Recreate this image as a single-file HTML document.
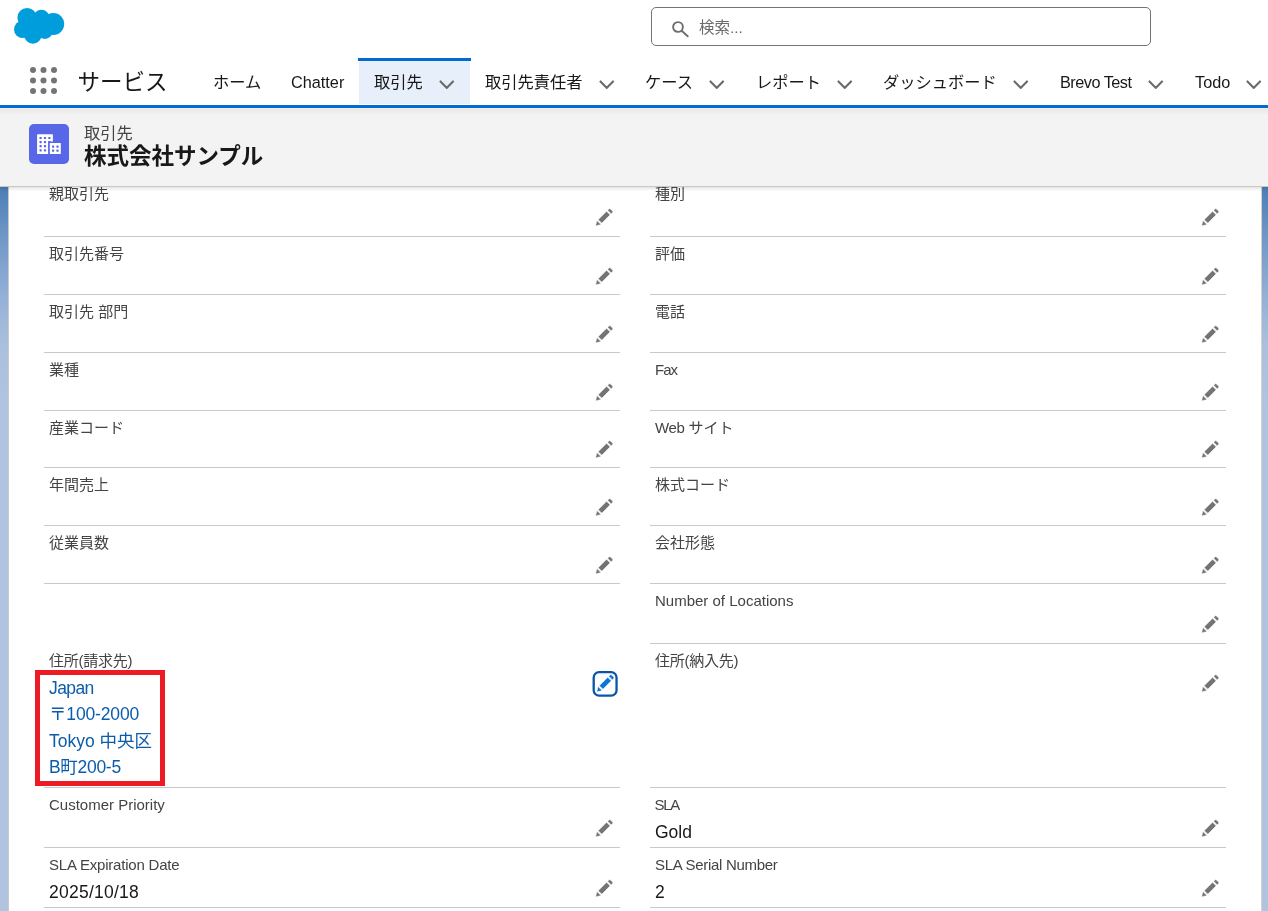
<!DOCTYPE html>
<html lang="ja">
<head>
<meta charset="utf-8">
<title>株式会社サンプル | 取引先 | Salesforce</title>
<style>
*{box-sizing:border-box;margin:0;padding:0}
html,body{width:1268px;height:911px;overflow:hidden}
body{position:relative;background:#b0c4df;font-family:"Liberation Sans","Noto Sans CJK JP",sans-serif;color:#181818}
#bg{position:absolute;left:0;top:186px;width:1268px;height:725px;background:linear-gradient(to bottom,#4a7db4 0px,#6f97c6 50px,#94b0d6 110px,#abc0dd 160px,#b0c4df 220px,#b0c4df 100%)}
#card{position:absolute;left:8px;top:186px;width:1254px;height:725px;background:#fff;border-left:1px solid #c8c8c8;border-right:1px solid #d6d1cc}
#top{position:absolute;left:0;top:0;width:1268px;height:108px;background:#fff;border-bottom:3px solid #006bd1}
#logo{position:absolute;left:0;top:0;width:80px;height:50px}
#search{position:absolute;left:651px;top:7px;width:500px;height:39px;border:1px solid #747474;border-radius:5px;background:#fff}
#search svg{position:absolute;left:20px;top:12.800px;width:17px;height:17px;fill:none;stroke:#6e6e6e;stroke-width:1.9;stroke-linecap:round}
#search span{position:absolute;left:47px;top:0;line-height:39px;font-size:15.5px;color:#6b6b6b;white-space:nowrap}
#waffle{position:absolute;left:30px;top:67.300px;width:27px;height:27px;fill:#747474}
#app{position:absolute;left:77.500px;top:61px;height:43px;line-height:43px;font-size:22.5px;color:#181818;white-space:nowrap}
.nav{position:absolute;top:61px;height:43px;line-height:43px;font-size:16.25px;color:#181818;white-space:nowrap}
.chev{position:absolute;top:75.5px;width:17.5px;height:17.5px;fill:#6a6a6a}
#tab{position:absolute;left:359px;top:58px;width:111px;height:46px;background:#e7f0fa}
#tabbar{position:absolute;left:358px;top:58px;width:113px;height:3px;background:#006bd1}
#hdr{position:absolute;left:0;top:108px;width:1268px;height:79px;background:linear-gradient(to bottom,#f3ece9 0,#f3ece9 1px,#e8e8e8 1px,#f3f3f3 7px,#f3f3f3 100%);box-shadow:0 2px 3px rgba(0,0,0,.11);border-bottom:1px solid #c8c8c8}
#ico{position:absolute;left:29px;top:124px;width:40px;height:40px;border-radius:5px;background:#5867e8}
#ico svg{display:block;width:40px;height:40px}
#ent{position:absolute;left:84px;top:123px;font-size:16.25px;line-height:20px;color:#444;white-space:nowrap}
#ttl{position:absolute;left:84px;top:143px;font-size:22.5px;line-height:28px;font-weight:700;color:#181818;white-space:nowrap}
.lbl{position:absolute;font-size:15px;line-height:20px;color:#444;white-space:nowrap}
.val{position:absolute;font-size:17.5px;line-height:24px;color:#181818;white-space:nowrap}
.lnk{position:absolute;font-size:17.5px;line-height:24px;color:#0b5cab;white-space:nowrap}
.sep{position:absolute;height:1px;background:#c9c9c9}
.pen{position:absolute;width:18.500px;height:18.500px;fill:#747474;stroke:#fff;stroke-width:1.6;stroke-linejoin:round}
#red{position:absolute;left:35px;top:670px;width:130px;height:116px;border:5px solid #ed1c24}
#editbtn{position:absolute;left:592px;top:670px;width:27px;height:28px}
#editbtn svg{position:absolute;left:0;top:0;width:27px;height:28px}
#wrap{position:absolute;left:0;top:0;width:1268px;height:911px;will-change:transform}
</style>
</head>
<body>
<div id="wrap">
<div id="bg"></div>
<div id="card"></div>
<div class="lbl" style="left:49px;top:184px;">親取引先</div>
<div class="lbl" style="left:655px;top:184px;">種別</div>
<div class="sep" style="left:44px;top:236px;width:576px"></div>
<div class="sep" style="left:650px;top:236px;width:576px"></div>
<svg class="pen" style="left:595.45px;top:208px" viewBox="0 0 52 52"><path d="M9.5 33.4l8.9 8.9c.4.4 1 .4 1.400 0L42 20c.4-.4.4-1 0-1.400l-8.800-8.800c-.400-.400-1-.400-1.400 0L9.500 32.100c-.400.400-.400 1 0 1.300zM36.100 5.700c-.400.400-.400 1 0 1.400l8.800 8.800c.400.400 1 .400 1.400 0l2.500-2.500c1.600-1.500 1.600-3.900 0-5.500l-4.700-4.700c-1.600-1.600-4.100-1.600-5.700 0l-2.300 2.500zM2.100 48.200c-.200 1 .700 1.900 1.700 1.700l10.900-2.600c.400-.100.700-.300.900-.500l.200-.200c.200-.200.300-.900-.100-1.300l-9-9c-.400-.400-1.100-.300-1.300-.100l-.200.200c-.300.300-.400.600-.500.900L2.100 48.200z"/></svg>
<svg class="pen" style="left:1201.15px;top:208px" viewBox="0 0 52 52"><path d="M9.5 33.4l8.9 8.9c.4.4 1 .4 1.400 0L42 20c.4-.4.4-1 0-1.400l-8.800-8.800c-.400-.400-1-.400-1.400 0L9.500 32.100c-.400.400-.400 1 0 1.300zM36.100 5.700c-.400.400-.400 1 0 1.400l8.800 8.800c.400.400 1 .400 1.400 0l2.500-2.500c1.600-1.500 1.600-3.900 0-5.500l-4.700-4.700c-1.600-1.600-4.100-1.600-5.700 0l-2.300 2.500zM2.100 48.200c-.200 1 .700 1.900 1.700 1.700l10.900-2.600c.400-.100.700-.300.900-.500l.200-.200c.200-.200.300-.900-.100-1.300l-9-9c-.400-.400-1.100-.300-1.300-.100l-.200.200c-.300.300-.400.600-.500.900L2.100 48.200z"/></svg>
<div class="lbl" style="left:49px;top:244px;">取引先番号</div>
<div class="lbl" style="left:655px;top:244px;">評価</div>
<div class="sep" style="left:44px;top:294px;width:576px"></div>
<div class="sep" style="left:650px;top:294px;width:576px"></div>
<svg class="pen" style="left:595.45px;top:266.7px" viewBox="0 0 52 52"><path d="M9.5 33.4l8.9 8.9c.4.4 1 .4 1.400 0L42 20c.4-.4.4-1 0-1.400l-8.800-8.800c-.400-.400-1-.400-1.400 0L9.500 32.100c-.400.400-.400 1 0 1.300zM36.100 5.700c-.400.400-.400 1 0 1.400l8.800 8.800c.400.400 1 .400 1.400 0l2.500-2.500c1.600-1.500 1.600-3.900 0-5.500l-4.700-4.700c-1.600-1.600-4.100-1.600-5.700 0l-2.300 2.500zM2.100 48.200c-.200 1 .700 1.900 1.700 1.700l10.900-2.600c.400-.100.700-.300.900-.500l.200-.200c.200-.200.300-.900-.100-1.300l-9-9c-.400-.400-1.100-.300-1.300-.100l-.200.200c-.300.300-.400.600-.500.900L2.100 48.200z"/></svg>
<svg class="pen" style="left:1201.15px;top:266.7px" viewBox="0 0 52 52"><path d="M9.5 33.4l8.9 8.9c.4.4 1 .4 1.400 0L42 20c.4-.4.4-1 0-1.400l-8.800-8.800c-.400-.400-1-.400-1.400 0L9.500 32.100c-.400.400-.400 1 0 1.300zM36.100 5.700c-.400.400-.400 1 0 1.400l8.800 8.800c.400.400 1 .400 1.400 0l2.500-2.500c1.600-1.500 1.600-3.900 0-5.500l-4.700-4.700c-1.600-1.600-4.100-1.600-5.700 0l-2.300 2.500zM2.100 48.200c-.200 1 .700 1.900 1.700 1.700l10.900-2.600c.400-.100.700-.300.900-.500l.200-.200c.200-.200.300-.900-.100-1.300l-9-9c-.400-.400-1.100-.300-1.300-.100l-.200.200c-.300.300-.400.600-.500.900L2.100 48.200z"/></svg>
<div class="lbl" style="left:49px;top:302px;">取引先 部門</div>
<div class="lbl" style="left:655px;top:302px;">電話</div>
<div class="sep" style="left:44px;top:352px;width:576px"></div>
<div class="sep" style="left:650px;top:352px;width:576px"></div>
<svg class="pen" style="left:595.45px;top:324.7px" viewBox="0 0 52 52"><path d="M9.5 33.4l8.9 8.9c.4.4 1 .4 1.400 0L42 20c.4-.4.4-1 0-1.400l-8.800-8.800c-.400-.400-1-.400-1.400 0L9.500 32.100c-.400.400-.400 1 0 1.300zM36.100 5.700c-.400.400-.400 1 0 1.400l8.800 8.800c.400.400 1 .400 1.400 0l2.500-2.500c1.600-1.500 1.600-3.900 0-5.500l-4.700-4.700c-1.600-1.600-4.100-1.600-5.700 0l-2.300 2.500zM2.100 48.200c-.200 1 .700 1.900 1.700 1.700l10.900-2.600c.400-.100.700-.300.900-.500l.200-.200c.200-.200.300-.900-.100-1.300l-9-9c-.400-.400-1.100-.300-1.300-.100l-.200.200c-.300.300-.400.600-.500.900L2.100 48.200z"/></svg>
<svg class="pen" style="left:1201.15px;top:324.7px" viewBox="0 0 52 52"><path d="M9.5 33.4l8.9 8.9c.4.4 1 .4 1.400 0L42 20c.4-.4.4-1 0-1.400l-8.800-8.800c-.400-.400-1-.400-1.400 0L9.500 32.100c-.400.400-.400 1 0 1.300zM36.100 5.700c-.400.400-.400 1 0 1.400l8.800 8.800c.400.400 1 .400 1.400 0l2.500-2.500c1.600-1.500 1.600-3.900 0-5.500l-4.700-4.700c-1.600-1.600-4.100-1.600-5.700 0l-2.300 2.500zM2.100 48.200c-.200 1 .700 1.900 1.700 1.700l10.900-2.600c.400-.100.700-.300.900-.500l.200-.200c.200-.200.300-.900-.100-1.300l-9-9c-.400-.400-1.100-.300-1.300-.100l-.200.200c-.300.300-.400.600-.500.900L2.100 48.200z"/></svg>
<div class="lbl" style="left:49px;top:360px;">業種</div>
<div class="lbl" style="left:655px;top:360px;letter-spacing:-1px">Fax</div>
<div class="sep" style="left:44px;top:410px;width:576px"></div>
<div class="sep" style="left:650px;top:410px;width:576px"></div>
<svg class="pen" style="left:595.45px;top:382.7px" viewBox="0 0 52 52"><path d="M9.5 33.4l8.9 8.9c.4.4 1 .4 1.400 0L42 20c.4-.4.4-1 0-1.400l-8.800-8.800c-.400-.400-1-.400-1.400 0L9.500 32.100c-.400.400-.400 1 0 1.300zM36.100 5.700c-.400.400-.400 1 0 1.400l8.800 8.800c.400.400 1 .400 1.400 0l2.500-2.500c1.600-1.500 1.600-3.900 0-5.500l-4.700-4.700c-1.600-1.600-4.100-1.600-5.700 0l-2.300 2.500zM2.100 48.200c-.200 1 .700 1.900 1.700 1.700l10.900-2.600c.400-.100.700-.300.900-.500l.200-.200c.200-.200.300-.900-.100-1.300l-9-9c-.400-.400-1.100-.300-1.300-.100l-.200.200c-.300.300-.400.600-.500.900L2.100 48.200z"/></svg>
<svg class="pen" style="left:1201.15px;top:382.7px" viewBox="0 0 52 52"><path d="M9.5 33.4l8.9 8.9c.4.4 1 .4 1.400 0L42 20c.4-.4.4-1 0-1.400l-8.800-8.800c-.400-.400-1-.400-1.400 0L9.500 32.100c-.400.400-.400 1 0 1.300zM36.100 5.700c-.400.400-.400 1 0 1.400l8.800 8.800c.400.400 1 .400 1.400 0l2.500-2.500c1.600-1.500 1.600-3.900 0-5.500l-4.700-4.700c-1.600-1.600-4.100-1.600-5.700 0l-2.300 2.500zM2.100 48.200c-.200 1 .700 1.900 1.700 1.700l10.900-2.600c.400-.100.700-.300.900-.500l.200-.200c.200-.200.300-.900-.100-1.300l-9-9c-.400-.400-1.100-.300-1.300-.100l-.200.200c-.300.300-.400.600-.500.900L2.100 48.200z"/></svg>
<div class="lbl" style="left:49px;top:418px;">産業コード</div>
<div class="lbl" style="left:655px;top:418px;"><span style="letter-spacing:-.4px">Web</span> サイト</div>
<div class="sep" style="left:44px;top:467px;width:576px"></div>
<div class="sep" style="left:650px;top:467px;width:576px"></div>
<svg class="pen" style="left:595.45px;top:439.7px" viewBox="0 0 52 52"><path d="M9.5 33.4l8.9 8.9c.4.4 1 .4 1.400 0L42 20c.4-.4.4-1 0-1.400l-8.800-8.800c-.400-.400-1-.400-1.400 0L9.500 32.100c-.400.400-.400 1 0 1.300zM36.100 5.700c-.400.400-.400 1 0 1.400l8.800 8.800c.400.400 1 .400 1.400 0l2.500-2.500c1.600-1.500 1.600-3.900 0-5.500l-4.700-4.700c-1.600-1.600-4.100-1.600-5.700 0l-2.300 2.500zM2.100 48.200c-.200 1 .700 1.900 1.700 1.700l10.900-2.600c.400-.100.700-.300.900-.500l.200-.200c.200-.200.300-.900-.100-1.300l-9-9c-.400-.400-1.100-.300-1.300-.100l-.200.200c-.300.300-.400.600-.500.900L2.100 48.200z"/></svg>
<svg class="pen" style="left:1201.15px;top:439.7px" viewBox="0 0 52 52"><path d="M9.5 33.4l8.9 8.9c.4.4 1 .4 1.400 0L42 20c.4-.4.4-1 0-1.400l-8.800-8.800c-.400-.400-1-.400-1.400 0L9.500 32.100c-.400.400-.400 1 0 1.300zM36.100 5.700c-.400.400-.400 1 0 1.400l8.800 8.800c.400.400 1 .400 1.400 0l2.500-2.500c1.600-1.500 1.600-3.900 0-5.500l-4.700-4.700c-1.600-1.600-4.100-1.600-5.700 0l-2.300 2.500zM2.100 48.200c-.200 1 .700 1.900 1.700 1.700l10.900-2.600c.400-.100.700-.300.900-.500l.200-.200c.200-.200.300-.900-.100-1.300l-9-9c-.400-.400-1.100-.300-1.300-.100l-.200.200c-.300.300-.400.600-.500.900L2.100 48.200z"/></svg>
<div class="lbl" style="left:49px;top:475px;">年間売上</div>
<div class="lbl" style="left:655px;top:475px;">株式コード</div>
<div class="sep" style="left:44px;top:525px;width:576px"></div>
<div class="sep" style="left:650px;top:525px;width:576px"></div>
<svg class="pen" style="left:595.45px;top:497.7px" viewBox="0 0 52 52"><path d="M9.5 33.4l8.9 8.9c.4.4 1 .4 1.400 0L42 20c.4-.4.4-1 0-1.400l-8.800-8.800c-.400-.400-1-.400-1.400 0L9.500 32.100c-.400.400-.400 1 0 1.300zM36.100 5.700c-.400.400-.400 1 0 1.400l8.800 8.800c.400.400 1 .400 1.400 0l2.500-2.500c1.600-1.500 1.600-3.900 0-5.500l-4.700-4.700c-1.600-1.600-4.100-1.600-5.700 0l-2.300 2.500zM2.100 48.200c-.200 1 .700 1.900 1.700 1.700l10.900-2.600c.400-.100.700-.300.900-.500l.200-.200c.200-.200.300-.900-.100-1.300l-9-9c-.400-.400-1.100-.300-1.300-.100l-.200.200c-.300.300-.400.600-.500.900L2.100 48.200z"/></svg>
<svg class="pen" style="left:1201.15px;top:497.7px" viewBox="0 0 52 52"><path d="M9.5 33.4l8.9 8.9c.4.4 1 .4 1.400 0L42 20c.4-.4.4-1 0-1.400l-8.800-8.800c-.400-.400-1-.400-1.400 0L9.500 32.100c-.400.400-.400 1 0 1.300zM36.100 5.700c-.400.400-.400 1 0 1.400l8.800 8.800c.400.400 1 .400 1.400 0l2.500-2.500c1.600-1.500 1.600-3.900 0-5.500l-4.700-4.700c-1.600-1.600-4.100-1.600-5.700 0l-2.300 2.500zM2.100 48.200c-.200 1 .700 1.900 1.700 1.700l10.900-2.600c.400-.100.700-.300.900-.500l.200-.200c.200-.200.300-.900-.100-1.300l-9-9c-.400-.400-1.100-.300-1.300-.100l-.200.200c-.300.300-.400.600-.500.900L2.100 48.200z"/></svg>
<div class="lbl" style="left:49px;top:533px;">従業員数</div>
<div class="lbl" style="left:655px;top:533px;">会社形態</div>
<div class="sep" style="left:44px;top:583px;width:576px"></div>
<div class="sep" style="left:650px;top:583px;width:576px"></div>
<svg class="pen" style="left:595.45px;top:555.7px" viewBox="0 0 52 52"><path d="M9.5 33.4l8.9 8.9c.4.4 1 .4 1.400 0L42 20c.4-.4.4-1 0-1.400l-8.800-8.800c-.400-.400-1-.400-1.400 0L9.500 32.100c-.400.400-.400 1 0 1.300zM36.100 5.700c-.400.400-.400 1 0 1.400l8.800 8.800c.400.400 1 .400 1.400 0l2.500-2.500c1.600-1.500 1.600-3.900 0-5.500l-4.700-4.700c-1.600-1.600-4.100-1.600-5.700 0l-2.300 2.500zM2.100 48.200c-.200 1 .700 1.900 1.700 1.700l10.900-2.600c.400-.100.700-.300.900-.500l.200-.200c.200-.200.300-.900-.100-1.300l-9-9c-.400-.400-1.100-.300-1.300-.100l-.200.200c-.300.300-.400.600-.500.900L2.100 48.200z"/></svg>
<svg class="pen" style="left:1201.15px;top:555.7px" viewBox="0 0 52 52"><path d="M9.5 33.4l8.9 8.9c.4.4 1 .4 1.400 0L42 20c.4-.4.4-1 0-1.400l-8.800-8.800c-.400-.400-1-.400-1.400 0L9.500 32.100c-.400.400-.400 1 0 1.300zM36.100 5.700c-.400.400-.400 1 0 1.400l8.800 8.800c.400.400 1 .400 1.400 0l2.500-2.500c1.600-1.500 1.600-3.900 0-5.500l-4.700-4.700c-1.600-1.600-4.100-1.600-5.700 0l-2.300 2.500zM2.100 48.200c-.200 1 .700 1.900 1.700 1.700l10.900-2.600c.400-.100.700-.300.900-.500l.200-.200c.200-.200.300-.900-.100-1.300l-9-9c-.400-.400-1.100-.300-1.300-.100l-.200.200c-.300.300-.400.600-.500.900L2.100 48.200z"/></svg>
<div class="lbl" style="left:655px;top:591px;">Number of Locations</div>
<div class="sep" style="left:650px;top:643px;width:576px"></div>
<svg class="pen" style="left:1201.15px;top:615px" viewBox="0 0 52 52"><path d="M9.5 33.4l8.9 8.9c.4.4 1 .4 1.400 0L42 20c.4-.4.4-1 0-1.400l-8.800-8.800c-.400-.400-1-.400-1.400 0L9.500 32.100c-.400.400-.400 1 0 1.300zM36.100 5.700c-.400.400-.400 1 0 1.400l8.800 8.800c.400.400 1 .400 1.400 0l2.500-2.500c1.600-1.500 1.600-3.900 0-5.500l-4.700-4.700c-1.600-1.600-4.100-1.600-5.700 0l-2.300 2.500zM2.100 48.200c-.200 1 .700 1.900 1.700 1.700l10.900-2.600c.400-.100.700-.300.900-.500l.200-.200c.200-.200.300-.900-.100-1.300l-9-9c-.400-.400-1.100-.300-1.300-.100l-.200.200c-.300.300-.400.600-.500.900L2.100 48.200z"/></svg>
<div class="lbl" style="left:49px;top:651px;letter-spacing:-.25px">住所(請求先)</div>
<div class="lbl" style="left:655px;top:651px;letter-spacing:-.25px">住所(納入先)</div>
<div class="sep" style="left:44px;top:787px;width:576px"></div>
<div class="sep" style="left:650px;top:787px;width:576px"></div>
<svg class="pen" style="left:1201.15px;top:674px" viewBox="0 0 52 52"><path d="M9.5 33.4l8.9 8.9c.4.4 1 .4 1.400 0L42 20c.4-.4.4-1 0-1.400l-8.800-8.800c-.400-.400-1-.400-1.400 0L9.500 32.100c-.400.400-.400 1 0 1.300zM36.100 5.700c-.400.400-.400 1 0 1.400l8.800 8.800c.400.400 1 .400 1.400 0l2.500-2.500c1.600-1.500 1.600-3.900 0-5.500l-4.700-4.700c-1.600-1.600-4.100-1.600-5.700 0l-2.300 2.500zM2.100 48.200c-.200 1 .700 1.900 1.700 1.700l10.900-2.600c.400-.100.700-.300.900-.500l.200-.200c.200-.200.300-.900-.100-1.300l-9-9c-.400-.400-1.100-.300-1.300-.100l-.200.200c-.300.300-.400.600-.500.900L2.100 48.200z"/></svg>
<div class="lnk" style="left:49px;top:676px;letter-spacing:-.6px">Japan</div>
<div class="lnk" style="left:49px;top:702px;letter-spacing:-.15px">〒100-2000</div>
<div class="lnk" style="left:49px;top:729px;">Tokyo 中央区</div>
<div class="lnk" style="left:49px;top:755px;letter-spacing:-.3px">B町200-5</div>
<div id="red"></div>
<div id="editbtn"><svg viewBox="0 0 27 28"><rect x="1.700" y="2.150" width="22.850" height="23.400" rx="5.400" fill="#fff" stroke="#0b55a8" stroke-width="2.300"/><g transform="translate(4.150,4) scale(.35577)"><path d="M9.5 33.4l8.9 8.9c.4.4 1 .4 1.400 0L42 20c.4-.4.4-1 0-1.400l-8.800-8.800c-.400-.400-1-.400-1.400 0L9.500 32.100c-.400.400-.400 1 0 1.300zM36.100 5.700c-.400.400-.400 1 0 1.400l8.800 8.800c.400.400 1 .400 1.400 0l2.500-2.500c1.600-1.500 1.600-3.900 0-5.500l-4.700-4.700c-1.600-1.600-4.100-1.600-5.700 0l-2.300 2.500zM2.100 48.200c-.200 1 .700 1.900 1.700 1.700l10.900-2.600c.400-.100.700-.300.900-.500l.200-.200c.200-.200.300-.900-.100-1.300l-9-9c-.400-.400-1.100-.300-1.300-.100l-.200.200c-.300.300-.400.600-.500.900L2.100 48.200z" fill="#0f74d4" stroke="#fff" stroke-width="1.600" stroke-linejoin="round"/></g></svg></div>
<div class="lbl" style="left:49px;top:795px;">Customer Priority</div>
<div class="lbl" style="left:655px;top:795px;letter-spacing:-1.300px;margin-left:-.5px">SLA</div>
<div class="val" style="left:655px;top:820px;">Gold</div>
<div class="sep" style="left:44px;top:847px;width:576px"></div>
<div class="sep" style="left:650px;top:847px;width:576px"></div>
<svg class="pen" style="left:595.45px;top:819px" viewBox="0 0 52 52"><path d="M9.5 33.4l8.9 8.9c.4.4 1 .4 1.400 0L42 20c.4-.4.4-1 0-1.400l-8.800-8.800c-.400-.400-1-.400-1.400 0L9.500 32.100c-.400.400-.400 1 0 1.300zM36.100 5.700c-.400.400-.400 1 0 1.400l8.800 8.800c.400.400 1 .400 1.400 0l2.500-2.500c1.600-1.500 1.600-3.900 0-5.500l-4.700-4.700c-1.600-1.600-4.100-1.600-5.700 0l-2.300 2.500zM2.100 48.200c-.200 1 .700 1.900 1.700 1.700l10.900-2.600c.400-.100.700-.300.900-.500l.200-.200c.200-.200.300-.900-.100-1.300l-9-9c-.400-.400-1.100-.300-1.300-.100l-.200.200c-.300.300-.400.600-.500.900L2.100 48.200z"/></svg>
<svg class="pen" style="left:1201.15px;top:819px" viewBox="0 0 52 52"><path d="M9.5 33.4l8.9 8.9c.4.4 1 .4 1.400 0L42 20c.4-.4.4-1 0-1.400l-8.800-8.800c-.400-.400-1-.400-1.400 0L9.500 32.100c-.400.400-.400 1 0 1.300zM36.100 5.700c-.400.400-.400 1 0 1.400l8.800 8.800c.400.400 1 .400 1.400 0l2.500-2.500c1.600-1.500 1.600-3.900 0-5.500l-4.700-4.700c-1.600-1.600-4.100-1.600-5.700 0l-2.300 2.500zM2.100 48.200c-.200 1 .700 1.900 1.700 1.700l10.900-2.600c.400-.100.700-.300.900-.500l.200-.200c.200-.200.300-.900-.100-1.300l-9-9c-.400-.400-1.100-.300-1.300-.100l-.200.200c-.300.300-.400.600-.500.900L2.100 48.200z"/></svg>
<div class="lbl" style="left:49px;top:855px;letter-spacing:-.2px">SLA Expiration Date</div>
<div class="lbl" style="left:655px;top:855px;letter-spacing:-.3px">SLA Serial Number</div>
<div class="val" style="left:49px;top:880px;letter-spacing:.25px">2025/10/18</div>
<div class="val" style="left:655px;top:880px;">2</div>
<div class="sep" style="left:44px;top:907px;width:576px"></div>
<div class="sep" style="left:650px;top:907px;width:576px"></div>
<svg class="pen" style="left:595.45px;top:879px" viewBox="0 0 52 52"><path d="M9.5 33.4l8.9 8.9c.4.4 1 .4 1.400 0L42 20c.4-.4.4-1 0-1.400l-8.800-8.800c-.400-.400-1-.400-1.400 0L9.500 32.100c-.400.400-.400 1 0 1.300zM36.100 5.700c-.400.400-.400 1 0 1.400l8.800 8.800c.400.400 1 .400 1.400 0l2.500-2.500c1.600-1.500 1.600-3.900 0-5.500l-4.700-4.700c-1.600-1.600-4.100-1.600-5.700 0l-2.300 2.500zM2.100 48.200c-.200 1 .700 1.900 1.700 1.700l10.900-2.600c.400-.100.700-.300.900-.500l.200-.200c.200-.200.300-.900-.100-1.300l-9-9c-.400-.400-1.100-.300-1.300-.100l-.200.200c-.300.300-.400.600-.500.900L2.100 48.200z"/></svg>
<svg class="pen" style="left:1201.15px;top:879px" viewBox="0 0 52 52"><path d="M9.5 33.4l8.9 8.9c.4.4 1 .4 1.400 0L42 20c.4-.4.4-1 0-1.400l-8.800-8.800c-.400-.400-1-.400-1.400 0L9.500 32.100c-.400.400-.400 1 0 1.300zM36.100 5.700c-.400.400-.400 1 0 1.400l8.800 8.800c.400.400 1 .400 1.400 0l2.500-2.500c1.600-1.500 1.600-3.900 0-5.500l-4.700-4.700c-1.600-1.600-4.100-1.600-5.700 0l-2.300 2.500zM2.100 48.200c-.200 1 .700 1.900 1.700 1.700l10.900-2.600c.400-.100.700-.300.900-.500l.200-.200c.200-.200.300-.900-.100-1.300l-9-9c-.400-.400-1.100-.300-1.300-.100l-.200.200c-.300.300-.400.600-.500.900L2.100 48.200z"/></svg>
<div id="top"></div>
<svg id="logo" viewBox="0 0 80 50"><g fill="#009ddc"><circle cx="27.100" cy="17.700" r="9.700"/><circle cx="41.400" cy="17.700" r="8"/><circle cx="53.300" cy="24" r="10.900"/><circle cx="22.700" cy="29.300" r="8.700"/><circle cx="32.900" cy="34.800" r="8.900"/><circle cx="44.800" cy="30.900" r="8"/><rect x="24" y="18" width="28" height="16"/></g></svg>
<div id="search"><svg viewBox="0 0 17 17"><circle cx="6" cy="6" r="4.900"/><path d="M9.700 9.700L15.700 15.300"/></svg><span>検索...</span></div>
<svg id="waffle" viewBox="0 0 27 27"><circle cx="3.0" cy="3.0" r="3"/><circle cx="13.5" cy="3.0" r="3"/><circle cx="24.0" cy="3.0" r="3"/><circle cx="3.0" cy="13.5" r="3"/><circle cx="13.5" cy="13.5" r="3"/><circle cx="24.0" cy="13.5" r="3"/><circle cx="3.0" cy="24.0" r="3"/><circle cx="13.5" cy="24.0" r="3"/><circle cx="24.0" cy="24.0" r="3"/></svg>
<div id="app">サービス</div>
<div id="tab"></div><div id="tabbar"></div>
<div class="nav" style="left:213px;">ホーム</div>
<div class="nav" style="left:291px;">Chatter</div>
<div class="nav" style="left:374px;">取引先</div>
<svg class="chev" style="left:438.35px" viewBox="0 0 52 52"><path d="M47.600 17.800L27.100 38.500c-.600.600-1.600.600-2.200 0L4.400 17.800c-.600-.600-.600-1.600 0-2.200l2.200-2.200c.600-.600 1.600-.600 2.200 0l16.100 16.400c.600.600 1.600.600 2.200 0l16.100-16.400c.600-.600 1.600-.600 2.200 0l2.200 2.200c.500.600.500 1.600-.100 2.200z"/></svg>
<div class="nav" style="left:485px;">取引先責任者</div>
<svg class="chev" style="left:597.95px" viewBox="0 0 52 52"><path d="M47.600 17.800L27.100 38.500c-.600.600-1.600.600-2.200 0L4.400 17.800c-.600-.600-.600-1.600 0-2.200l2.200-2.200c.600-.600 1.600-.600 2.200 0l16.100 16.400c.600.600 1.600.600 2.200 0l16.100-16.400c.600-.600 1.600-.600 2.200 0l2.200 2.200c.500.600.500 1.600-.100 2.200z"/></svg>
<div class="nav" style="left:645px;">ケース</div>
<svg class="chev" style="left:708.15px" viewBox="0 0 52 52"><path d="M47.600 17.800L27.100 38.500c-.600.600-1.600.600-2.200 0L4.400 17.800c-.600-.600-.600-1.600 0-2.200l2.200-2.200c.600-.600 1.600-.600 2.200 0l16.100 16.400c.600.600 1.600.600 2.200 0l16.100-16.400c.600-.600 1.600-.600 2.200 0l2.200 2.200c.500.600.500 1.600-.100 2.200z"/></svg>
<div class="nav" style="left:756px;">レポート</div>
<svg class="chev" style="left:835.95px" viewBox="0 0 52 52"><path d="M47.600 17.800L27.100 38.500c-.600.600-1.600.600-2.200 0L4.400 17.800c-.600-.600-.600-1.600 0-2.200l2.200-2.200c.600-.600 1.600-.600 2.200 0l16.100 16.400c.600.600 1.600.600 2.200 0l16.100-16.400c.600-.600 1.600-.600 2.200 0l2.200 2.200c.500.600.500 1.600-.100 2.200z"/></svg>
<div class="nav" style="left:883px;">ダッシュボード</div>
<svg class="chev" style="left:1012.35px" viewBox="0 0 52 52"><path d="M47.600 17.800L27.100 38.500c-.600.600-1.600.600-2.200 0L4.400 17.800c-.600-.600-.600-1.600 0-2.200l2.200-2.200c.600-.600 1.600-.600 2.200 0l16.100 16.400c.600.600 1.600.600 2.200 0l16.100-16.400c.600-.600 1.600-.600 2.200 0l2.200 2.200c.500.600.500 1.600-.100 2.200z"/></svg>
<div class="nav" style="left:1060px;letter-spacing:-.5px">Brevo Test</div>
<svg class="chev" style="left:1147.35px" viewBox="0 0 52 52"><path d="M47.600 17.800L27.100 38.500c-.600.600-1.600.600-2.200 0L4.400 17.800c-.600-.600-.600-1.600 0-2.200l2.200-2.200c.600-.600 1.600-.600 2.200 0l16.100 16.400c.600.600 1.600.600 2.200 0l16.100-16.400c.600-.600 1.600-.600 2.200 0l2.200 2.200c.500.600.500 1.600-.100 2.200z"/></svg>
<div class="nav" style="left:1195px;">Todo</div>
<svg class="chev" style="left:1245.25px" viewBox="0 0 52 52"><path d="M47.600 17.800L27.100 38.500c-.600.600-1.600.600-2.200 0L4.400 17.800c-.600-.600-.600-1.600 0-2.200l2.200-2.200c.600-.600 1.600-.600 2.200 0l16.100 16.400c.600.600 1.600.600 2.200 0l16.100-16.400c.600-.600 1.600-.600 2.200 0l2.200 2.200c.500.600.500 1.600-.100 2.200z"/></svg>
<div id="hdr"></div>
<div id="ico"><svg viewBox="0 0 40 40"><rect x="8.1" y="10.300" width="15.800" height="19.700" rx=".5" fill="#fff"/><g fill="#5867e8"><rect x="10.5" y="12.9" width="2.2" height="2.2" rx=".6"/><rect x="14.9" y="12.9" width="2.2" height="2.2" rx=".6"/><rect x="19.3" y="12.9" width="2.2" height="2.2" rx=".6"/><rect x="10.5" y="17.0" width="2.2" height="2.2" rx=".6"/><rect x="14.9" y="17.0" width="2.2" height="2.2" rx=".6"/><rect x="19.3" y="17.0" width="2.2" height="2.2" rx=".6"/><rect x="10.5" y="21.1" width="2.2" height="2.2" rx=".6"/><rect x="14.9" y="21.1" width="2.2" height="2.2" rx=".6"/><rect x="19.3" y="21.1" width="2.2" height="2.2" rx=".6"/><rect x="10.5" y="25.2" width="2.2" height="2.2" rx=".6"/><rect x="14.9" y="25.2" width="2.2" height="2.2" rx=".6"/><rect x="19.3" y="25.2" width="2.2" height="2.2" rx=".6"/></g><rect x="19.100" y="17.500" width="14" height="14" fill="#5867e8"/><rect x="20.800" y="19.100" width="11" height="10.900" rx=".5" fill="#fff"/><g fill="#5867e8"><rect x="23.0" y="21.5" width="2.2" height="2.2" rx=".6"/><rect x="27.4" y="21.5" width="2.2" height="2.2" rx=".6"/><rect x="23.0" y="25.6" width="2.2" height="2.2" rx=".6"/><rect x="27.4" y="25.6" width="2.2" height="2.2" rx=".6"/></g></svg></div>
<div id="ent">取引先</div>
<h1 id="ttl">株式会社サンプル</h1>
</div>
</body>
</html>
